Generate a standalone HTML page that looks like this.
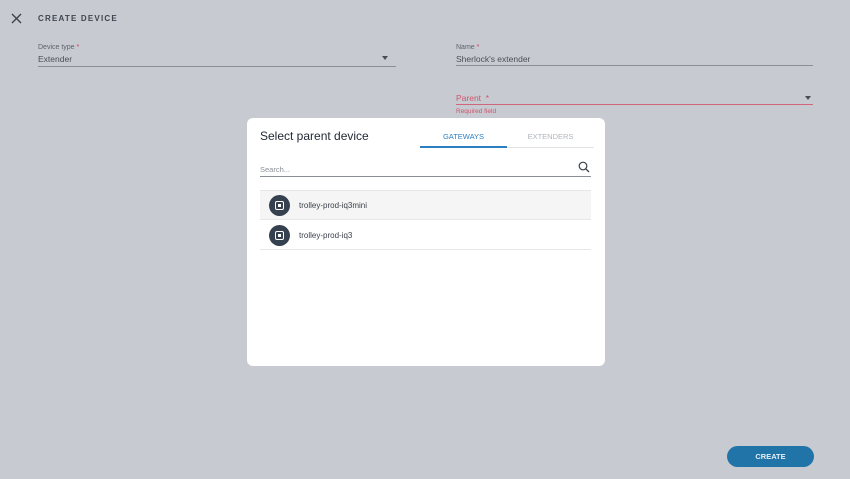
<!DOCTYPE html>
<html><head><meta charset="utf-8"><style>
*{box-sizing:border-box;margin:0;padding:0}
body{width:850px;height:479px;background:#c7cad0;font-family:"Liberation Sans",sans-serif;position:relative;overflow:hidden;color:#3a3f47}
.abs{position:absolute}
.lbl{font-size:7px;color:#5d636c}
.star{color:#d2455c}
.line{height:1px;background:#8a8f97}
.tri{width:0;height:0;border-left:3.5px solid transparent;border-right:3.5px solid transparent;border-top:4px solid #4a4f57}
</style></head><body>
<svg class="abs" style="left:11px;top:13px" width="11" height="11" viewBox="0 0 11 11"><path d="M1 1L10 10M10 1L1 10" stroke="#3a3f47" stroke-width="1.3"/></svg>
<div class="abs" style="left:38px;top:14px;font-size:8px;font-weight:bold;letter-spacing:1.2px;color:#3e4550">CREATE DEVICE</div>

<div class="abs lbl" style="left:38px;top:44px">Device type <span class="star">*</span></div>
<div class="abs" style="left:38px;top:54px;font-size:8.5px;color:#4a4f57">Extender</div>
<div class="abs tri" style="left:382px;top:56px"></div>
<div class="abs line" style="left:38px;top:66px;width:358px"></div>

<div class="abs lbl" style="left:456px;top:44px">Name <span class="star">*</span></div>
<div class="abs" style="left:456px;top:54px;font-size:8.5px;color:#4a4f57">Sherlock's extender</div>
<div class="abs line" style="left:456px;top:65px;width:357px"></div>

<div class="abs" style="left:456px;top:93px;font-size:8.5px;color:#d0566b">Parent &nbsp;<span>*</span></div>
<div class="abs tri" style="left:805px;top:96px"></div>
<div class="abs" style="left:456px;top:104px;width:357px;height:1px;background:#d0667a"></div>
<div class="abs" style="left:456px;top:108px;font-size:6.5px;color:#d0566b">Required field</div>

<div class="abs" style="left:247px;top:118px;width:358px;height:248px;background:#fff;border-radius:6px">
  <div class="abs" style="left:13px;top:11px;font-size:12px;color:#1f2733">Select parent device</div>
  <div class="abs" style="left:173px;top:14px;width:87px;text-align:center;font-size:7.5px;color:#2d7fc1">GATEWAYS</div>
  <div class="abs" style="left:260px;top:14px;width:87px;text-align:center;font-size:7.5px;color:#b0b4ba">EXTENDERS</div>
  <div class="abs" style="left:173px;top:29px;width:174px;height:1px;background:#e0e2e5"></div>
  <div class="abs" style="left:173px;top:28px;width:87px;height:2px;background:#2d7fc1"></div>
  <div class="abs" style="left:13px;top:47px;font-size:7.5px;color:#8a8f97">Search...</div>
  <svg class="abs" style="left:331px;top:43px" width="12" height="12" viewBox="0 0 12 12"><circle cx="5" cy="5" r="3.8" fill="none" stroke="#3a3f47" stroke-width="1.2"/><path d="M7.8 7.8L11 11" stroke="#3a3f47" stroke-width="1.3"/></svg>
  <div class="abs" style="left:13px;top:58px;width:331px;height:1px;background:#8a8f97"></div>
  <div class="abs" style="left:13px;top:72px;width:331px;height:30px;background:#f5f5f5;border-top:1px solid #e6e7e9;border-bottom:1px solid #e6e7e9"></div>
  <div class="abs" style="left:13px;top:131px;width:331px;height:1px;background:#e6e7e9"></div>
  <div class="abs" style="left:22px;top:77px;width:21px;height:21px;border-radius:50%;background:#36414f"><div class="abs" style="left:6px;top:6px;width:9px;height:9px;border:1.5px solid #fff;border-radius:2px"><div class="abs" style="left:1.5px;top:1.5px;width:3px;height:3px;background:#fff"></div></div></div>
  <div class="abs" style="left:52px;top:83px;font-size:8px;color:#3a3f47">trolley-prod-iq3mini</div>
  <div class="abs" style="left:22px;top:107px;width:21px;height:21px;border-radius:50%;background:#36414f"><div class="abs" style="left:6px;top:6px;width:9px;height:9px;border:1.5px solid #fff;border-radius:2px"><div class="abs" style="left:1.5px;top:1.5px;width:3px;height:3px;background:#fff"></div></div></div>
  <div class="abs" style="left:52px;top:113px;font-size:8px;color:#3a3f47">trolley-prod-iq3</div>
</div>

<div class="abs" style="left:727px;top:446px;width:87px;height:21px;border-radius:11px;background:#2174a8;color:#e6eef5;font-size:7.5px;font-weight:bold;text-align:center;line-height:21px">CREATE</div>
</body></html>
